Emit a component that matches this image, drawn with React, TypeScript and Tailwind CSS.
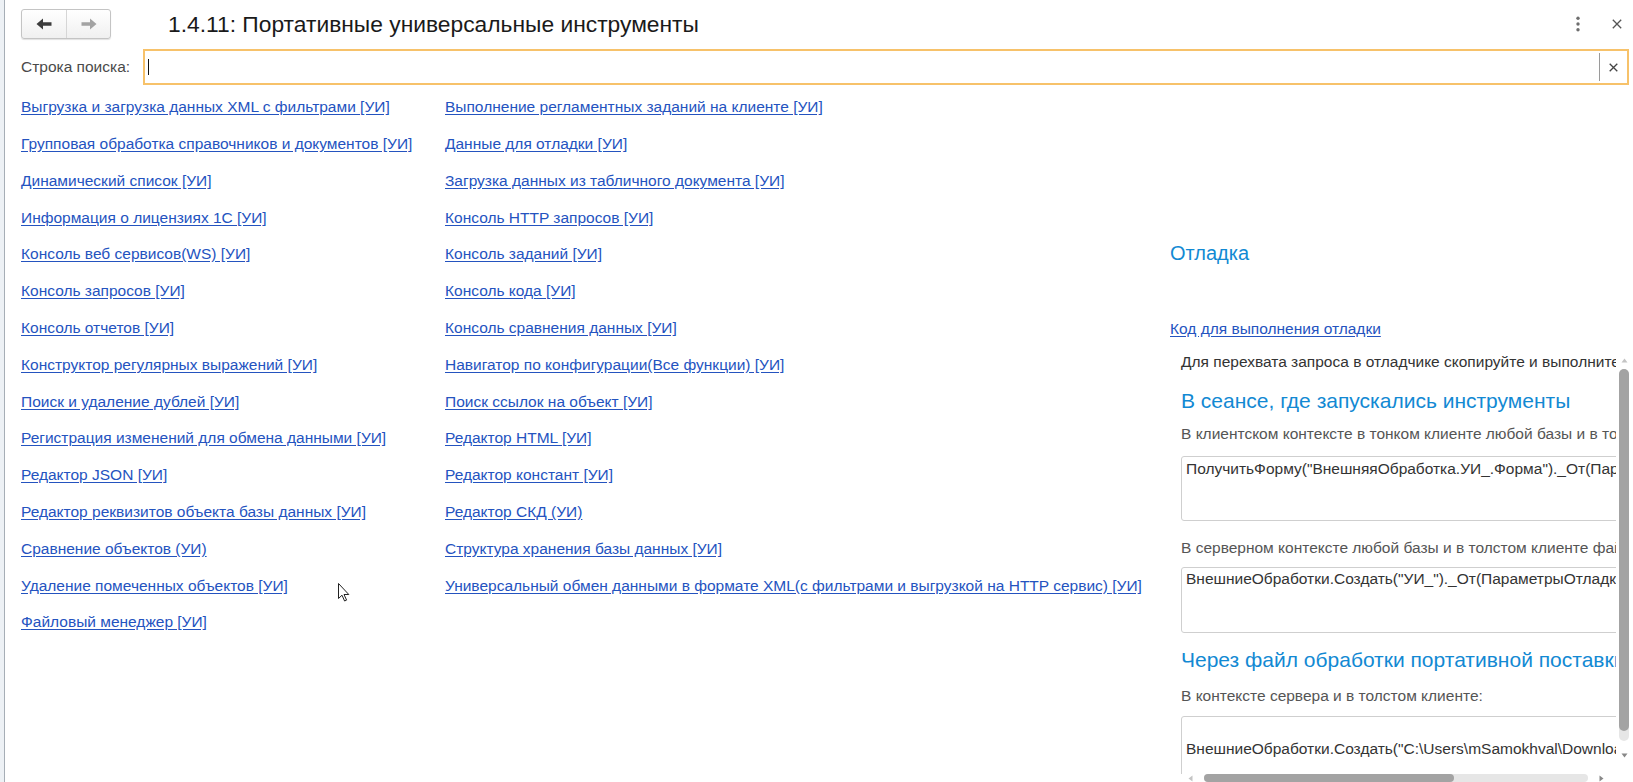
import React from "react";

const col1 = [
  "Выгрузка и загрузка данных XML с фильтрами [УИ]",
  "Групповая обработка справочников и документов [УИ]",
  "Динамический список [УИ]",
  "Информация о лицензиях 1С [УИ]",
  "Консоль веб сервисов(WS) [УИ]",
  "Консоль запросов [УИ]",
  "Консоль отчетов [УИ]",
  "Конструктор регулярных выражений [УИ]",
  "Поиск и удаление дублей [УИ]",
  "Регистрация изменений для обмена данными [УИ]",
  "Редактор JSON [УИ]",
  "Редактор реквизитов объекта базы данных [УИ]",
  "Сравнение объектов (УИ)",
  "Удаление помеченных объектов [УИ]",
  "Файловый менеджер [УИ]",
];

const col2 = [
  "Выполнение регламентных заданий на клиенте [УИ]",
  "Данные для отладки [УИ]",
  "Загрузка данных из табличного документа [УИ]",
  "Консоль HTTP запросов [УИ]",
  "Консоль заданий [УИ]",
  "Консоль кода [УИ]",
  "Консоль сравнения данных [УИ]",
  "Навигатор по конфигурации(Все функции) [УИ]",
  "Поиск ссылок на объект [УИ]",
  "Редактор HTML [УИ]",
  "Редактор констант [УИ]",
  "Редактор СКД (УИ)",
  "Структура хранения базы данных [УИ]",
  "Универсальный обмен данными в формате XML(с фильтрами и выгрузкой на HTTP сервис) [УИ]",
];

function LinkRow({ text }: { text: string }) {
  return (
    <div className="h-[36.8px] shrink-0 flex items-center pb-[1px]">
      <a className="text-[15.5px] text-[#2453bf] underline underline-offset-[2px] decoration-[#2453bf] whitespace-nowrap cursor-pointer">
        {text}
      </a>
    </div>
  );
}

function Arrow({ color, flip }: { color: string; flip?: boolean }) {
  return (
    <svg width="16" height="12" viewBox="0 0 16 12" style={{ transform: flip ? "scaleX(-1)" : undefined }}>
      <path d="M0.5 6 L7 0.6 V4.3 H15.5 V7.7 H7 V11.4 Z" fill={color} />
    </svg>
  );
}

export default function App() {
  return (
    <div className="w-[1633px] h-[782px] flex bg-white overflow-hidden relative font-['Liberation_Sans',Arial,sans-serif]">
      <div className="w-[4px] shrink-0 bg-[#edf1f5]" />
      <div className="w-[1px] shrink-0 bg-[#a6aeb6]" />
      <div className="flex-1 flex flex-col">
        {/* header */}
        <div className="h-[48px] shrink-0 flex items-center pl-[16px]">
          <div className="w-[90px] h-[30px] flex rounded-[3px] border border-[#c4c4c4] bg-gradient-to-b from-white to-[#f0f0f0] shadow-[0_1px_1px_rgba(0,0,0,0.12)]">
            <div className="w-[45px] flex items-center justify-center border-r border-[#d6d6d6]">
              <Arrow color="#3c3c3c" />
            </div>
            <div className="flex-1 flex items-center justify-center">
              <Arrow color="#a3a3a3" flip />
            </div>
          </div>
          <div className="ml-[57px] text-[22.8px] text-[#1a1a1a] whitespace-nowrap">
            1.4.11: Портативные универсальные инструменты
          </div>
          <div className="flex-1" />
          <div className="w-[12px] flex justify-center">
            <svg width="6" height="16" viewBox="0 0 6 16">
              <circle cx="3" cy="2.2" r="1.7" fill="#6e6e6e" />
              <circle cx="3" cy="8" r="1.7" fill="#6e6e6e" />
              <circle cx="3" cy="13.8" r="1.7" fill="#6e6e6e" />
            </svg>
          </div>
          <div className="w-[12px] ml-[27px] mr-[10px] flex justify-center">
            <svg width="10" height="10" viewBox="0 0 10 10">
              <path d="M0.8 0.8 L9.2 9.2 M9.2 0.8 L0.8 9.2" stroke="#555" strokeWidth="1.3" />
            </svg>
          </div>
        </div>
        {/* search */}
        <div className="mt-[1px] h-[36px] shrink-0 flex items-center pl-[16px] pr-[4px]">
          <div className="w-[122px] text-[15.5px] text-[#4a4a4a] whitespace-nowrap">Строка поиска:</div>
          <div className="flex-1 h-[36px] border-2 border-[#f7c26a] flex items-center">
            <div className="ml-[3px] w-[1px] h-[16px] bg-[#111]" />
            <div className="flex-1" />
            <div className="w-[1px] h-[28px] bg-[#9a9a9a]" />
            <div className="w-[27px] flex items-center justify-center">
              <svg width="9" height="9" viewBox="0 0 9 9">
                <path d="M0.7 0.7 L8.3 8.3 M8.3 0.7 L0.7 8.3" stroke="#444" strokeWidth="1.3" />
              </svg>
            </div>
          </div>
        </div>
        {/* content */}
        <div className="mt-[4px] flex flex-1 min-h-0">
          <div className="w-[440px] shrink-0 pl-[16px] flex flex-col">
            {col1.map((t) => (
              <LinkRow key={t} text={t} />
            ))}
          </div>
          <div className="w-[725px] shrink-0 flex flex-col">
            {col2.map((t) => (
              <LinkRow key={t} text={t} />
            ))}
          </div>
          <div className="flex-1 min-w-0 flex flex-col">
            <div className="mt-[146px] h-[36px] shrink-0 flex items-center text-[20px] text-[#1289d3]">Отладка</div>
            <div className="mt-[40px] h-[36px] shrink-0 flex items-center">
              <a className="text-[15.5px] text-[#2453bf] underline underline-offset-[2px] whitespace-nowrap cursor-pointer">
                Код для выполнения отладки
              </a>
            </div>
            {/* inner scroll area */}
            <div className="h-[435px] shrink-0 flex flex-col">
              <div className="h-[427px] shrink-0 flex">
                <div className="w-[446px] shrink-0 overflow-hidden pl-[11px] flex flex-col whitespace-nowrap">
                  <div className="h-[30px] shrink-0 flex items-center text-[15.5px] text-[#333]">
                    Для перехвата запроса в отладчике скопируйте и выполните одну из строк ниже
                  </div>
                  <div className="h-[48px] shrink-0 flex items-center text-[21px] text-[#1289d3]">
                    В сеансе, где запускались инструменты
                  </div>
                  <div className="mt-[2px] h-[14px] shrink-0 flex items-center text-[15.5px] text-[#555]">
                    В клиентском контексте в тонком клиенте любой базы и в толстом клиенте файловой базы:
                  </div>
                  <div className="mt-[15px] h-[65px] w-[700px] shrink-0 border border-[#cfcfcf] rounded-[3px] pl-[4px] pt-[2px] leading-[20px] text-[15.5px] text-[#333]">
                    ПолучитьФорму("ВнешняяОбработка.УИ_.Форма")._От(ПараметрыОтладки)
                  </div>
                  <div className="mt-[20px] h-[14px] shrink-0 flex items-center text-[15.5px] text-[#555]">
                    В серверном контексте любой базы и в толстом клиенте файловой базы:
                  </div>
                  <div className="mt-[12px] h-[66px] w-[700px] shrink-0 border border-[#cfcfcf] rounded-[3px] pl-[4px] pt-[1px] leading-[20px] text-[15.5px] text-[#333]">
                    ВнешниеОбработки.Создать("УИ_")._От(ПараметрыОтладки)
                  </div>
                  <div className="mt-[13px] h-[28px] shrink-0 flex items-center text-[21px] text-[#1289d3]">
                    Через файл обработки портативной поставки
                  </div>
                  <div className="mt-[15px] h-[14px] shrink-0 flex items-center text-[15.5px] text-[#555]">
                    В контексте сервера и в толстом клиенте:
                  </div>
                  <div className="mt-[13px] h-[80px] w-[700px] shrink-0 border border-[#cfcfcf] rounded-[3px] pl-[4px] pt-[22px] leading-[20px] text-[15.5px] text-[#333]">
                    ВнешниеОбработки.Создать("C:\Users\mSamokhval\Downloads\UI_.epf", Ложь)._От(ПараметрыОтладки)
                  </div>
                </div>
                <div className="w-[17px] shrink-0 flex flex-col items-center pl-[3px] pr-[4px]">
                  <div className="h-[11px] shrink-0" />
                  <svg width="7" height="5" viewBox="0 0 7 5">
                    <path d="M3.5 0.5 L6.5 4.5 H0.5 Z" fill="#c4c4c4" />
                  </svg>
                  <div className="mt-[6px] w-[10px] h-[372px] shrink-0 rounded-[5px] bg-[#e6e6e6] flex flex-col">
                    <div className="h-[362px] shrink-0 rounded-[5px] bg-[#a3a3a3]" />
                  </div>
                  <div className="mt-[12px]">
                    <svg width="7" height="5" viewBox="0 0 7 5">
                      <path d="M3.5 4.5 L6.5 0.5 H0.5 Z" fill="#888" />
                    </svg>
                  </div>
                </div>
              </div>
              <div className="h-[8px] shrink-0 flex items-center">
                <div className="ml-[16px] w-[8px] flex items-center justify-center">
                  <svg width="5" height="7" viewBox="0 0 5 7">
                    <path d="M0.5 3.5 L4.5 0.5 V6.5 Z" fill="#c4c4c4" />
                  </svg>
                </div>
                <div className="ml-[10px] w-[384px] h-[8px] rounded-[4px] bg-[#e6e6e6] flex">
                  <div className="w-[250px] h-[8px] rounded-[4px] bg-[#a3a3a3]" />
                </div>
                <div className="ml-[9px] w-[8px] flex items-center justify-center">
                  <svg width="5" height="7" viewBox="0 0 5 7">
                    <path d="M4.5 3.5 L0.5 0.5 V6.5 Z" fill="#888" />
                  </svg>
                </div>
              </div>
            </div>
          </div>
        </div>
      </div>
      {/* mouse cursor */}
      <svg className="absolute left-[338px] top-[583px]" width="12" height="19" viewBox="0 0 12 19">
        <path d="M0.5 0.5 V15.5 L4 12.2 L6.6 18 L8.6 17.1 L6 11.5 H10.8 Z" fill="#fff" stroke="#222" strokeWidth="1" strokeLinejoin="round" />
      </svg>
    </div>
  );
}
